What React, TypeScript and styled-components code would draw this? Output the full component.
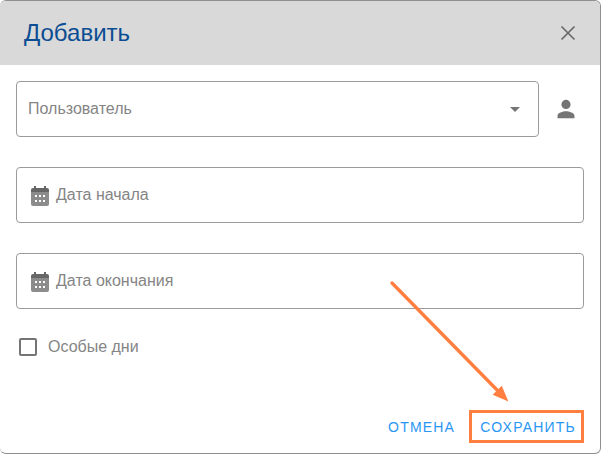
import React from "react";
import styled, { createGlobalStyle } from "styled-components";

const GlobalStyle = createGlobalStyle`
    html, body {
        margin: 0;
        padding: 0;
        background: #fff;
    }
`;

const CalendarIcon = () => (
    <svg width="18" height="20" viewBox="0 0 18 20">
        <path fill="#8c8c8c" d="M0 6h18v12a2 2 0 0 1-2 2H2a2 2 0 0 1-2-2z" />
        <path fill="#666" d="M2 2h1V0h2v2h8V0h2v2h1a2 2 0 0 1 2 2v2H0V4a2 2 0 0 1 2-2z" />
        <path fill="#fff" d="M4 9h2v2H4zM8 9h2v2H8zM12 9h2v2h-2zM4 14h2v2H4zM8 14h2v2H8zM12 14h2v2h-2z" />
    </svg>
);

const App = () => {
    return (
        <>
            <GlobalStyle />
            <DialogBlock>
                <HeaderBlock>
                    <Title>Добавить</Title>
                    <CloseIcon viewBox="0 0 16 16">
                        <path d="M1.5 1.5l13 13M14.5 1.5l-13 13" />
                    </CloseIcon>
                </HeaderBlock>
                <BodyBlock>
                    <UserRow>
                        <FieldBox $grow>
                            <FieldText>Пользователь</FieldText>
                            <Caret />
                        </FieldBox>
                        <UserIcon viewBox="0 0 24 24">
                            <path d="M12 12a4.600 4.600 0 1 0 0-9.200 4.600 4.600 0 0 0 0 9.200zm0 2.200c-3.200 0-8.500 1.600-8.500 4.600v2.400h17v-2.400c0-3-5.300-4.600-8.500-4.600z" />
                        </UserIcon>
                    </UserRow>
                    <FieldBox>
                        <IconSlot>
                            <CalendarIcon />
                        </IconSlot>
                        <FieldText>Дата начала</FieldText>
                    </FieldBox>
                    <FieldBox>
                        <IconSlot>
                            <CalendarIcon />
                        </IconSlot>
                        <FieldText>Дата окончания</FieldText>
                    </FieldBox>
                    <CheckRow>
                        <CheckBox />
                        <CheckLabel>Особые дни</CheckLabel>
                    </CheckRow>
                </BodyBlock>
                <FooterBlock>
                    <ActionButton>ОТМЕНА</ActionButton>
                    <ActionButton $marked>СОХРАНИТЬ</ActionButton>
                </FooterBlock>
                <ArrowOverlay viewBox="0 0 601 454">
                    <path d="M392 283L500 393" stroke="#ff7f41" strokeWidth="3.400" strokeLinecap="round" fill="none" />
                    <path d="M507 400L494 394.500L501.500 387z" fill="#ff7f41" stroke="#ff7f41" strokeWidth="1.500" />
                </ArrowOverlay>
            </DialogBlock>
        </>
    );
};

const DialogBlock = styled.div`
    position: relative;
    width: 601px;
    height: 454px;
    box-sizing: border-box;
    display: flex;
    flex-direction: column;
    background: #fff;
    border: 1px solid #8f8f8f;
    border-width: 1px 1px 1px 0;
    border-radius: 6px;
    overflow: hidden;
    font-family: "Liberation Sans", Arial, sans-serif;
`;

const HeaderBlock = styled.div`
    height: 64px;
    flex: none;
    display: flex;
    align-items: center;
    justify-content: space-between;
    padding: 0 24px 0 24px;
    background: #d9d9d9;
`;

const Title = styled.div`
    font-size: 24px;
    line-height: 64px;
    color: #0b4d92;
`;

const CloseIcon = styled.svg`
    width: 16px;
    height: 16px;
    fill: none;
    stroke: #666;
    stroke-width: 1.6;
`;

const BodyBlock = styled.div`
    flex: 1;
    display: flex;
    flex-direction: column;
    gap: 30px;
    padding: 16px 16px 0;
`;

const UserRow = styled.div`
    display: flex;
    align-items: center;
    gap: 15px;
`;

const FieldBox = styled.div<{ $grow?: boolean }>`
    flex: ${({ $grow }) => ($grow ? "1" : "none")};
    height: 56px;
    box-sizing: border-box;
    display: flex;
    align-items: center;
    padding: 0 11px;
    border: 1px solid #9b9b9b;
    border-radius: 4px;
`;

const FieldText = styled.span`
    flex: 1;
    font-size: 16px;
    line-height: 20px;
    color: #858585;
`;

const Caret = styled.span`
    width: 0;
    height: 0;
    margin-right: 7px;
    border-left: 5px solid transparent;
    border-right: 5px solid transparent;
    border-top: 5px solid #757575;
`;

const UserIcon = styled.svg`
    width: 24px;
    height: 24px;
    margin: 0 6px 0 0;
    fill: #757575;
`;

const IconSlot = styled.span`
    display: flex;
    margin: 2px 7px 0 3px;
`;

const CheckRow = styled.div`
    display: flex;
    align-items: center;
    gap: 11px;
    margin: -1px 0 0 3px;
`;

const CheckBox = styled.span`
    width: 18px;
    height: 18px;
    box-sizing: border-box;
    border: 2px solid #757575;
    border-radius: 2px;
`;

const CheckLabel = styled.span`
    font-size: 16px;
    color: #858585;
`;

const FooterBlock = styled.div`
    flex: none;
    display: flex;
    justify-content: flex-end;
    align-items: center;
    gap: 6px;
    padding: 0 16px 10px 0;
`;

const ActionButton = styled.div<{ $marked?: boolean }>`
    height: 33px;
    box-sizing: border-box;
    display: flex;
    align-items: center;
    padding: 0 5px 0 8px;
    font-size: 14px;
    letter-spacing: 1.2px;
    color: #2a96f3;
    border: 3px solid ${({ $marked }) => ($marked ? "#ff7f41" : "transparent")};
`;

const ArrowOverlay = styled.svg`
    position: absolute;
    left: 0;
    top: -1px;
    width: 601px;
    height: 454px;
    pointer-events: none;
`;

export default App;
